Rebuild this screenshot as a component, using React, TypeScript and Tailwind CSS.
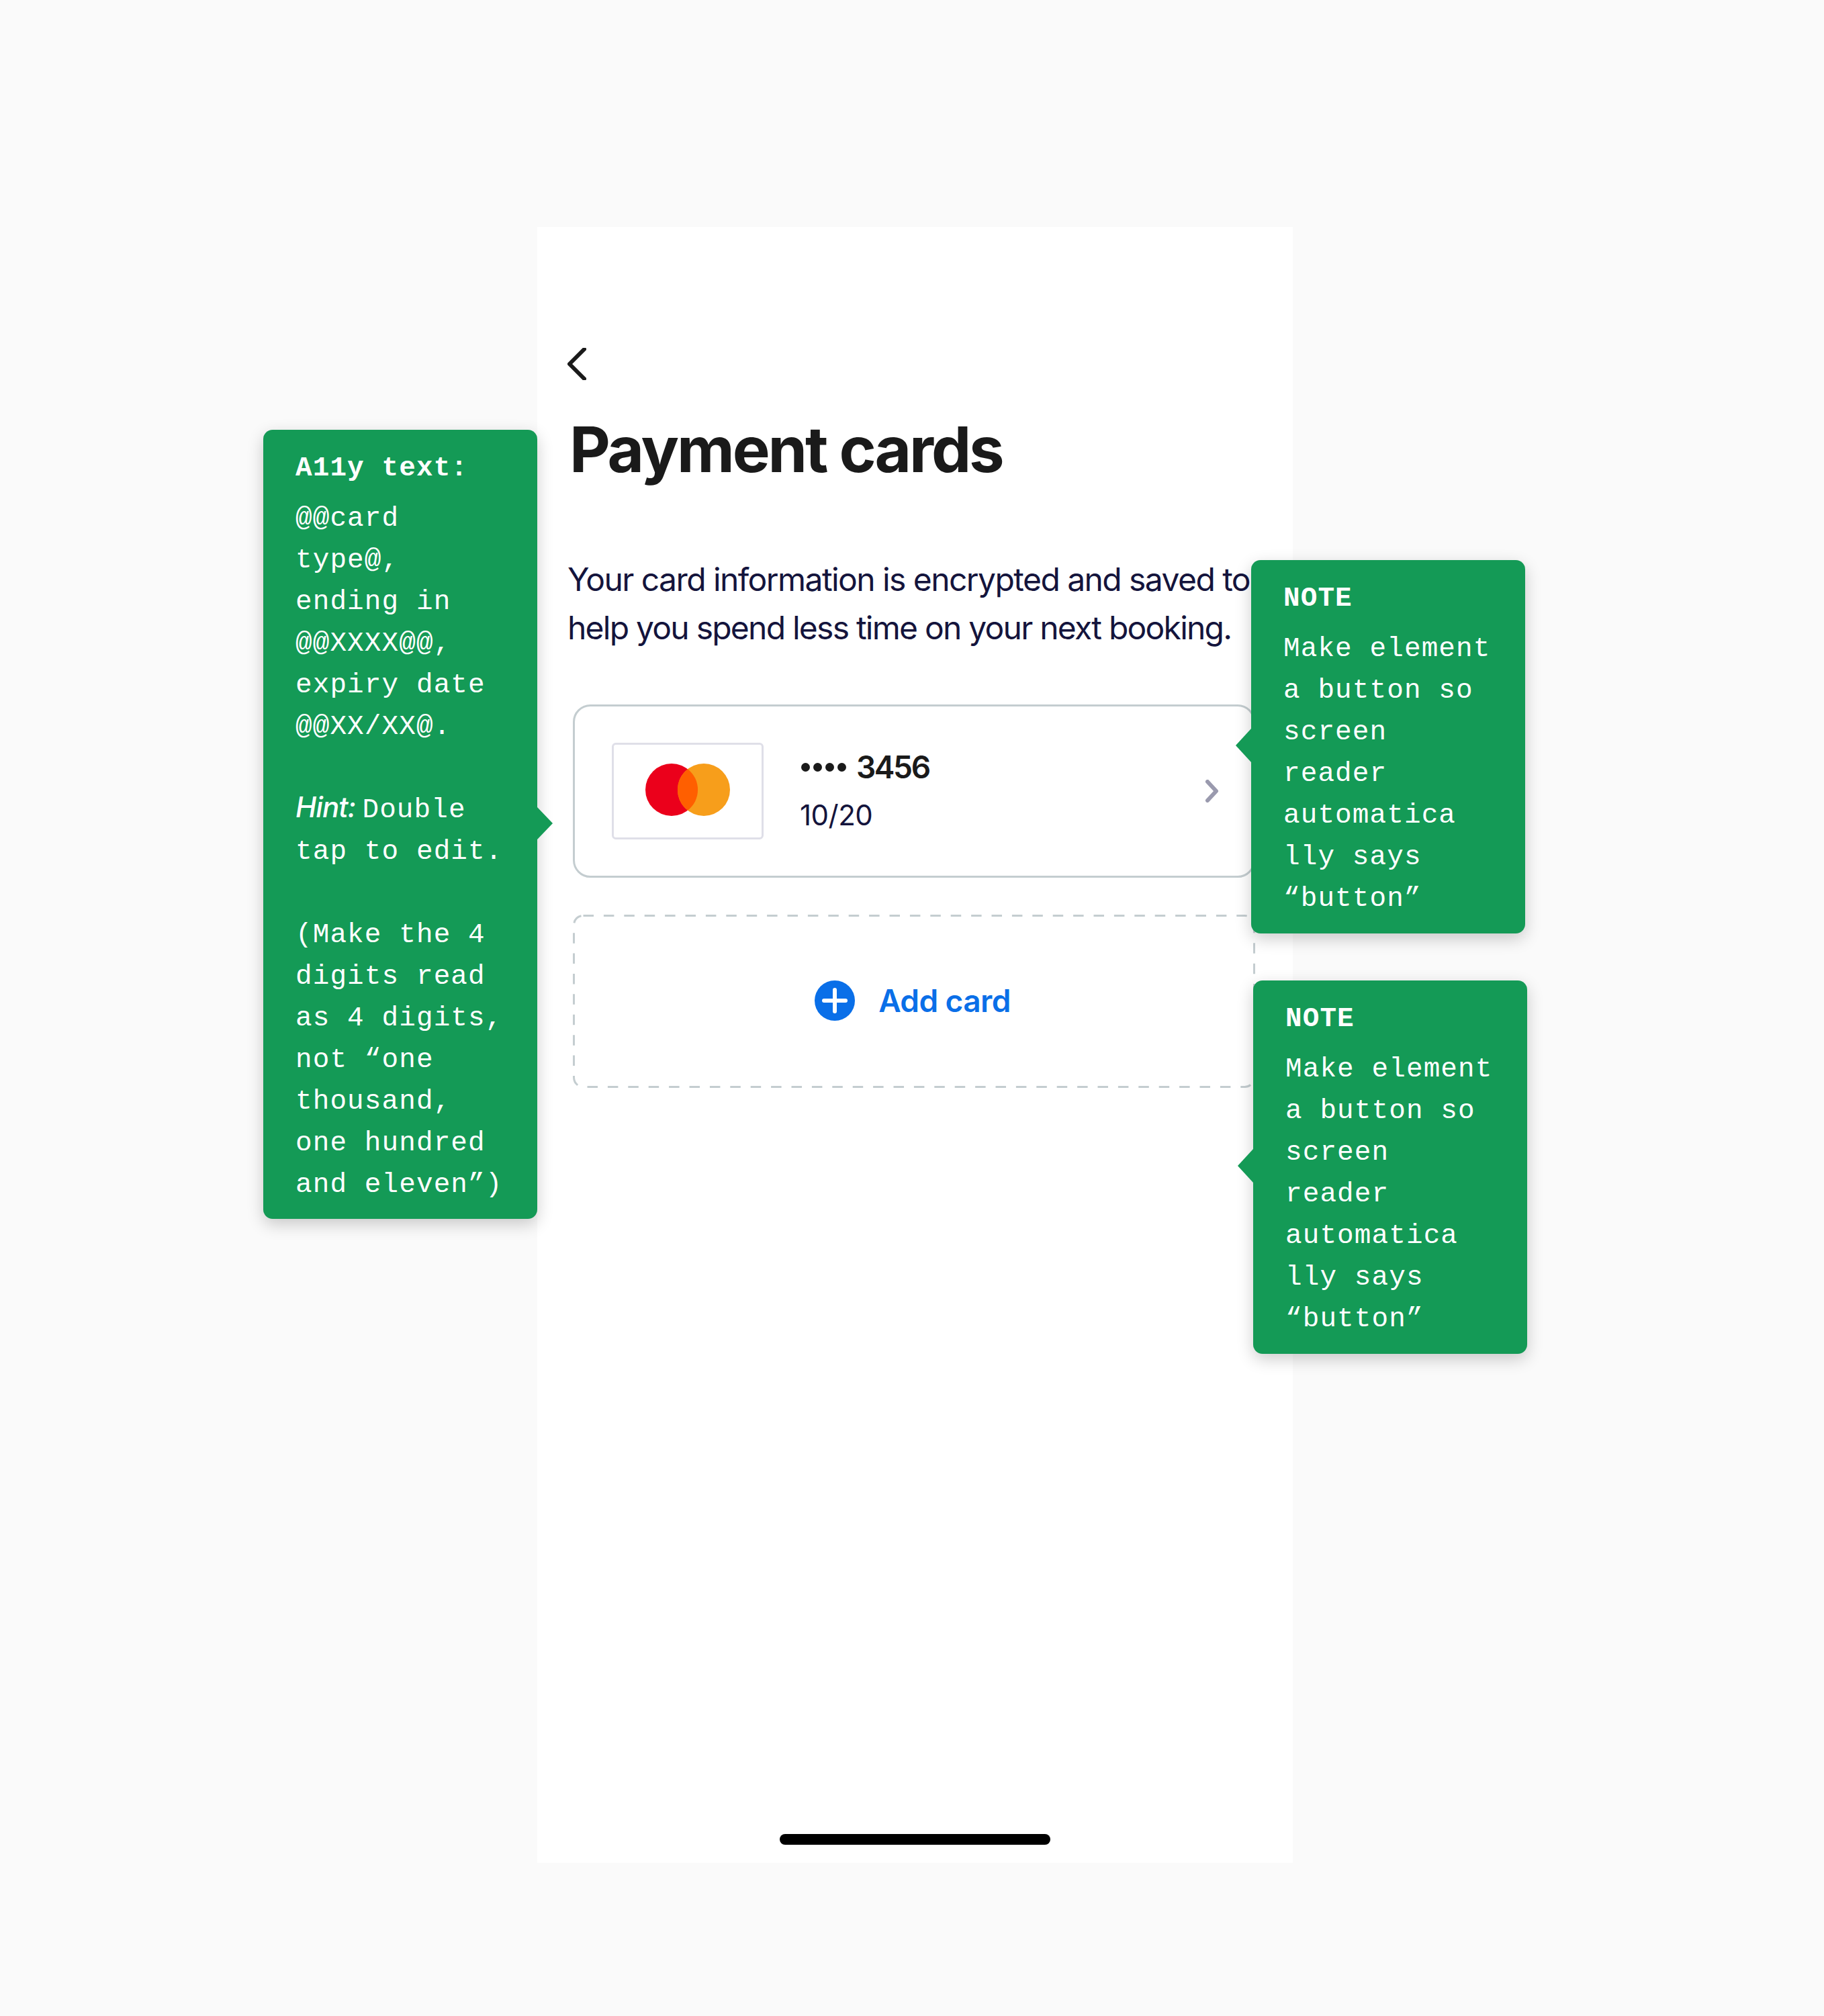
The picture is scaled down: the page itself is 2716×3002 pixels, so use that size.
const leftLines = [
  '@@card',
  'type@,',
  'ending in',
  '@@XXXX@@,',
  'expiry date',
  '@@XX/XX@.',
  '',
  'HINT',
  'tap to edit.',
  '',
  '(Make the 4',
  'digits read',
  'as 4 digits,',
  'not “one',
  'thousand,',
  'one hundred',
  'and eleven”)',
];

const noteLines = ['Make element', 'a button so', 'screen', 'reader', 'automatica', 'lly says', '“button”'];

const monoFont = "font-['Liberation_Mono',monospace] text-[41px] tracking-[1.1px] leading-[62px]";
const sansFont = "font-['Inter',sans-serif]";

// Green annotation card with a small pointer on one side
const Note = ({
  title,
  lines,
  className,
  arrow,
}: {
  title: string;
  lines: string[];
  className: string;
  arrow: 'left' | 'right';
}) => {
  return (
    <div className={`absolute z-10 rounded-[14px] bg-[#149a56] text-white shadow-[0_8px_24px_rgba(0,0,0,0.2)] ${className}`}>
      {arrow === 'right' ? (
        <svg className="absolute left-full top-[562px]" width="24" height="48" viewBox="0 0 24 48">
          <path d="M0 0 L23 24 L0 48 Z" fill="#149a56" />
        </svg>
      ) : (
        <svg className="absolute right-full top-[251px]" width="24" height="50" viewBox="0 0 24 50">
          <path d="M24 0 L1 25 L24 50 Z" fill="#149a56" />
        </svg>
      )}
      <div className={`${monoFont} h-[62px] font-bold`}>{title}</div>
      <div className={`mt-[13px] ${monoFont} whitespace-pre`}>
        {lines.map((line, i) =>
          line === 'HINT' ? (
            <div key={i} className="h-[62px]">
              <span className={`${sansFont} text-[42px] leading-[0] font-medium italic tracking-[-1px]`}>Hint: </span>Double
            </div>
          ) : (
            <div key={i} className="h-[62px]">
              {line}
            </div>
          ),
        )}
      </div>
    </div>
  );
};

const MastercardLogo = () => (
  <svg className="mb-[4px]" width="126" height="78" viewBox="0 0 126 78">
    <circle cx="39" cy="39" r="39" fill="#eb001b" />
    <circle cx="87" cy="39" r="39" fill="#f79e1b" />
    <path d="M63 8.2 A39 39 0 0 1 63 69.8 A39 39 0 0 1 63 8.2 Z" fill="#ff5f00" />
  </svg>
);

export default function App() {
  return (
    <div className={`relative min-h-[3002px] w-full bg-[#fafafa] pl-[800px] pt-[338px] ${sansFont}`}>
      <div className="relative flex h-[2436px] w-[1125px] flex-col bg-white pl-[45px]">
        {/* Back */}
        <div className="mt-[180px]">
          <svg width="28" height="48" viewBox="0 0 28 48" fill="none">
            <path d="M25 2 L3 24 L25 46" stroke="#1a1a1a" strokeWidth="6" strokeLinecap="round" strokeLinejoin="round" />
          </svg>
        </div>

        <h1 className="ml-[3px] mt-[46px] text-[94px] font-bold leading-[114px] tracking-[-3.1px] text-[#1a1a1a]">
          Payment cards
        </h1>

        <div className="mt-[101px] whitespace-nowrap text-[48px] leading-[72px] text-[#14143c]">
          <p className="tracking-[-1.57px]">Your card information is encrypted and saved to</p>
          <p className="tracking-[-1.77px]">help you spend less time on your next booking.</p>
        </div>

        {/* Saved card */}
        <div className="ml-[8px] mt-[78px] flex h-[258px] w-[1016px] items-center rounded-[26px] border-[3px] border-[#c4cdd0] pl-[55px] pr-[50px]">
          <div className="flex h-[144px] w-[226px] items-center justify-center rounded-[6px] border-[3px] border-[#dfdfe8]">
            <MastercardLogo />
          </div>
          <div className="ml-[56px] flex flex-col">
            <div className="flex items-center text-[46px] font-semibold leading-[60px] tracking-[-2.4px] text-[#1a1a1a]">
              <span className="mr-[15px] flex gap-[5px]">
                <span className="h-[13px] w-[13px] rounded-full bg-[#1a1a1a]" />
                <span className="h-[13px] w-[13px] rounded-full bg-[#1a1a1a]" />
                <span className="h-[13px] w-[13px] rounded-full bg-[#1a1a1a]" />
                <span className="h-[13px] w-[13px] rounded-full bg-[#1a1a1a]" />
              </span>
              3456
            </div>
            <div className="ml-[-2px] mt-[12px] text-[42px] leading-[60px] tracking-[-0.5px] text-[#14143c]">10/20</div>
          </div>
          <svg className="ml-auto" width="22" height="34" viewBox="0 0 22 34" fill="none">
            <path d="M4 3 L17 17 L4 31" stroke="#9a9aae" strokeWidth="6" strokeLinecap="round" strokeLinejoin="round" />
          </svg>
        </div>

        {/* Add card */}
        <div className="relative ml-[8px] mt-[55px] flex h-[258px] w-[1016px] items-center justify-center gap-[35px] pr-[4px]">
          <svg className="absolute inset-0" width="1016" height="258" viewBox="0 0 1016 258" fill="none">
            <rect
              x="1.5"
              y="1.5"
              width="1013"
              height="255"
              rx="14"
              stroke="#c4cdd0"
              strokeWidth="3"
              strokeDasharray="15.5 14.9"
            />
          </svg>
          <svg className="mb-[2px]" width="60" height="60" viewBox="0 0 60 60">
            <circle cx="30" cy="30" r="30" fill="#0a6fe8" />
            <path d="M30 14 V46 M14 30 H46" stroke="#fff" strokeWidth="6" strokeLinecap="round" />
          </svg>
          <span className="mb-[2px] text-[46px] font-semibold tracking-[-0.6px] text-[#0a6fe8]">Add card</span>
        </div>

        {/* Home indicator */}
        <div className="mb-[27px] ml-[-45px] mt-auto h-[16px] w-[403px] self-center rounded-full bg-black" />
      </div>

      <Note
        title="A11y text:"
        lines={leftLines}
        arrow="right"
        className="left-[392px] top-[640px] h-[1175px] w-[408px] pl-[48px] pt-[26px]"
      />
      <Note
        title="NOTE"
        lines={noteLines}
        arrow="left"
        className="left-[1863px] top-[834px] h-[556px] w-[408px] pl-[48px] pt-[26px]"
      />
      <Note
        title="NOTE"
        lines={noteLines}
        arrow="left"
        className="left-[1866px] top-[1460px] h-[556px] w-[408px] pl-[48px] pt-[26px]"
      />
    </div>
  );
}
